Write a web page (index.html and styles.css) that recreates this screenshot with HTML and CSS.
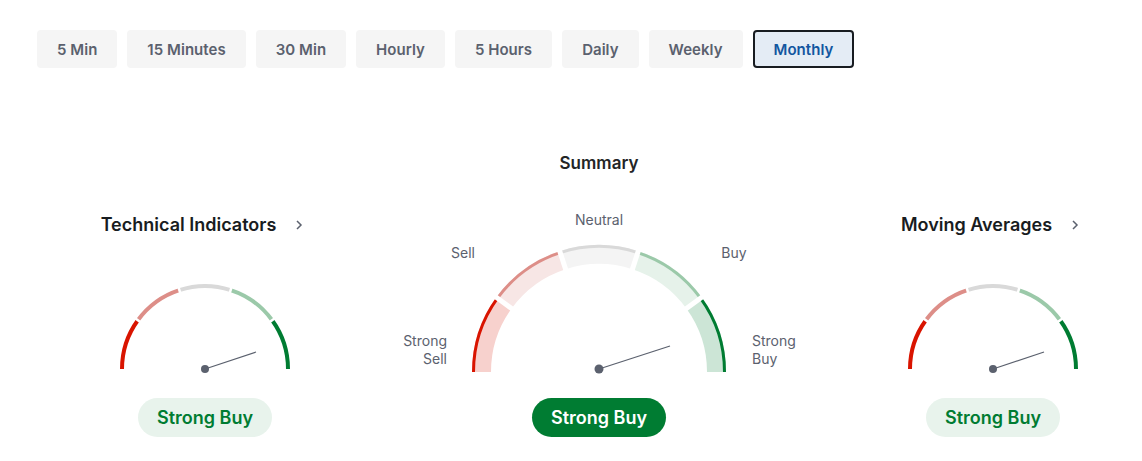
FILE: index.html
```html
<!DOCTYPE html>
<html lang="en">
<head>
    <meta charset="UTF-8">
    <meta name="viewport" content="width=device-width, initial-scale=1.0">
    <title>Technical Summary</title>
    <link rel="stylesheet" href="styles.css">
</head>
<body>
    <div class="tabs">
        <button class="tab">5 Min</button>
        <button class="tab">15 Minutes</button>
        <button class="tab">30 Min</button>
        <button class="tab">Hourly</button>
        <button class="tab">5 Hours</button>
        <button class="tab">Daily</button>
        <button class="tab">Weekly</button>
        <button class="tab active">Monthly</button>
    </div>

    <div class="ratings">
        <div class="side">
            <div class="side-title">
                <span>Technical Indicators</span>
                <svg class="chevron" width="8" height="12" viewBox="0 0 8 12"><path d="M2 2l4 4-4 4"/></svg>
            </div>
            <svg class="small-gauge" width="180" height="95" viewBox="0 0 180 95">
                <path class="s-sell-strong" d="M7 88A83 83 0 0 1 22.85 39.21"/>
                <path class="s-sell" d="M22.85 39.21A83 83 0 0 1 64.35 9.06"/>
                <path class="s-neutral" d="M64.35 9.06A83 83 0 0 1 115.65 9.06"/>
                <path class="s-buy" d="M115.65 9.06A83 83 0 0 1 157.15 39.21"/>
                <path class="s-buy-strong" d="M157.15 39.21A83 83 0 0 1 173 88"/>
                <g class="gap-small">
                    <line x1="26.9" y1="42.15" x2="18.81" y2="36.28"/>
                    <line x1="65.9" y1="13.82" x2="62.81" y2="4.31"/>
                    <line x1="114.1" y1="13.82" x2="117.19" y2="4.31"/>
                    <line x1="153.1" y1="42.15" x2="161.19" y2="36.28"/>
                </g>
                <line class="needle" x1="90" y1="88" x2="141" y2="71"/>
                <circle class="hub" cx="90" cy="88" r="4"/>
            </svg>
            <div class="signal light">Strong Buy</div>
        </div>

        <div class="summary">
            <h2>Summary</h2>
            <svg class="main-gauge" width="440" height="180" viewBox="0 0 440 180">
                <g class="band">
                    <path class="f-sell-strong" d="M102.5 172A117.5 117.5 0 0 1 124.94 102.94"/>
                    <path class="f-sell" d="M124.94 102.94A117.5 117.5 0 0 1 183.69 60.25"/>
                    <path class="f-neutral" d="M183.69 60.25A117.5 117.5 0 0 1 256.31 60.25"/>
                    <path class="f-buy" d="M256.31 60.25A117.5 117.5 0 0 1 315.06 102.94"/>
                    <path class="f-buy-strong" d="M315.06 102.94A117.5 117.5 0 0 1 337.5 172"/>
                </g>
                <g class="rim">
                    <path class="s-sell-strong" d="M94.5 172A125.5 125.5 0 0 1 118.47 98.23"/>
                    <path class="s-sell" d="M118.47 98.23A125.5 125.5 0 0 1 181.22 52.64"/>
                    <path class="s-neutral" d="M181.22 52.64A125.5 125.5 0 0 1 258.78 52.64"/>
                    <path class="s-buy" d="M258.78 52.64A125.5 125.5 0 0 1 321.53 98.23"/>
                    <path class="s-buy-strong" d="M321.53 98.23A125.5 125.5 0 0 1 345.5 172"/>
                </g>
                <g class="gap-main">
                    <line x1="135.05" y1="110.28" x2="114.83" y2="95.59"/>
                    <line x1="187.55" y1="72.14" x2="179.83" y2="48.36"/>
                    <line x1="252.45" y1="72.14" x2="260.17" y2="48.36"/>
                    <line x1="304.95" y1="110.28" x2="325.17" y2="95.59"/>
                </g>
                <line class="needle" x1="220" y1="169" x2="291" y2="146"/>
                <circle class="hub" cx="220" cy="169" r="4.5"/>

                <text class="label" x="220" y="25" text-anchor="middle">Neutral</text>
                <text class="label" x="84" y="58" text-anchor="middle">Sell</text>
                <text class="label" x="355" y="58" text-anchor="middle">Buy</text>
                <text class="label" x="68" y="145.5" text-anchor="end">Strong</text>
                <text class="label" x="68" y="164" text-anchor="end">Sell</text>
                <text class="label" x="373" y="145.5">Strong</text>
                <text class="label" x="373" y="164">Buy</text>
            </svg>
            <div class="signal solid">Strong Buy</div>
        </div>

        <div class="side">
            <div class="side-title">
                <span>Moving Averages</span>
                <svg class="chevron" width="8" height="12" viewBox="0 0 8 12"><path d="M2 2l4 4-4 4"/></svg>
            </div>
            <svg class="small-gauge" width="180" height="95" viewBox="0 0 180 95">
                <path class="s-sell-strong" d="M7 88A83 83 0 0 1 22.85 39.21"/>
                <path class="s-sell" d="M22.85 39.21A83 83 0 0 1 64.35 9.06"/>
                <path class="s-neutral" d="M64.35 9.06A83 83 0 0 1 115.65 9.06"/>
                <path class="s-buy" d="M115.65 9.06A83 83 0 0 1 157.15 39.21"/>
                <path class="s-buy-strong" d="M157.15 39.21A83 83 0 0 1 173 88"/>
                <g class="gap-small">
                    <line x1="26.9" y1="42.15" x2="18.81" y2="36.28"/>
                    <line x1="65.9" y1="13.82" x2="62.81" y2="4.31"/>
                    <line x1="114.1" y1="13.82" x2="117.19" y2="4.31"/>
                    <line x1="153.1" y1="42.15" x2="161.19" y2="36.28"/>
                </g>
                <line class="needle" x1="90" y1="88" x2="141" y2="71"/>
                <circle class="hub" cx="90" cy="88" r="4"/>
            </svg>
            <div class="signal light">Strong Buy</div>
        </div>
    </div>
</body>
</html>
```

FILE: styles.css
```css
body {
    margin: 0;
    font-family: Inter, "Noto Sans", Arial, sans-serif;
    background: #fff;
    color: #232526;
}
.tabs {
    display: flex;
    gap: 10px;
    padding: 30px 0 0 37px;
}
.tab {
    box-sizing: border-box;
    height: 38px;
    padding: 0 20px;
    border: none;
    border-radius: 4px;
    background: #f5f5f5;
    color: #5b616e;
    font-family: inherit;
    font-size: 15px;
    font-weight: 600;
    letter-spacing: 0.04px;
    cursor: pointer;
}
.tab.active {
    padding: 0 19px;
    border: 2px solid #181c21;
    background: #e4ecf5;
    color: #1256a0;
}
.ratings {
    display: grid;
    grid-template-columns: 298px 1fr 298px;
    padding-left: 56px;
    margin-top: 83px;
}
.side {
    padding-top: 62px;
    display: flex;
    flex-direction: column;
    align-items: center;
}
.side-title {
    display: flex;
    align-items: center;
    gap: 19px;
    padding-right: 6px;
    font-size: 18px;
    font-weight: 600;
    line-height: 24px;
    color: #181c21;
}
.chevron path {
    fill: none;
    stroke: #5b616e;
    stroke-width: 1.5;
}
.summary {
    display: flex;
    flex-direction: column;
    align-items: center;
}
.summary h2 {
    margin: 0;
    font-size: 17px;
    font-weight: 600;
    line-height: 24px;
    color: #232526;
}
.small-gauge {
    display: block;
    margin-top: 44px;
}
.main-gauge {
    display: block;
    margin-top: 25px;
}
.small-gauge path {
    fill: none;
    stroke-width: 4;
}
.rim path {
    fill: none;
    stroke-width: 3;
}
.band path {
    fill: none;
    stroke-width: 19;
}
.s-sell-strong { stroke: #d91400; }
.s-sell { stroke: #dd8e88; }
.s-neutral { stroke: #d9d9d9; }
.s-buy { stroke: #9bc9a9; }
.s-buy-strong { stroke: #007c32; }
.f-sell-strong { stroke: #f7d1cd; }
.f-sell { stroke: #f7e6e5; }
.f-neutral { stroke: #f4f4f4; }
.f-buy { stroke: #e6f2ea; }
.f-buy-strong { stroke: #cce5d6; }
.gap-small line {
    stroke: #fff;
    stroke-width: 2.5;
}
.gap-main line {
    stroke: #fff;
    stroke-width: 5;
}
.needle {
    stroke: #5b616e;
    stroke-width: 1.3;
}
.hub {
    fill: #5b616e;
}
.label {
    font-family: Inter, "Noto Sans", Arial, sans-serif;
    font-size: 14px;
    fill: #5b616e;
}
.signal {
    margin-top: 22px;
    height: 39px;
    padding: 0 19px;
    border-radius: 20px;
    font-size: 18px;
    font-weight: 600;
    line-height: 39px;
}
.summary .signal {
    margin-top: 18px;
}
.signal.light {
    background: #e8f3ec;
    color: #007c32;
}
.signal.solid {
    background: #007c32;
    color: #fff;
}
```
